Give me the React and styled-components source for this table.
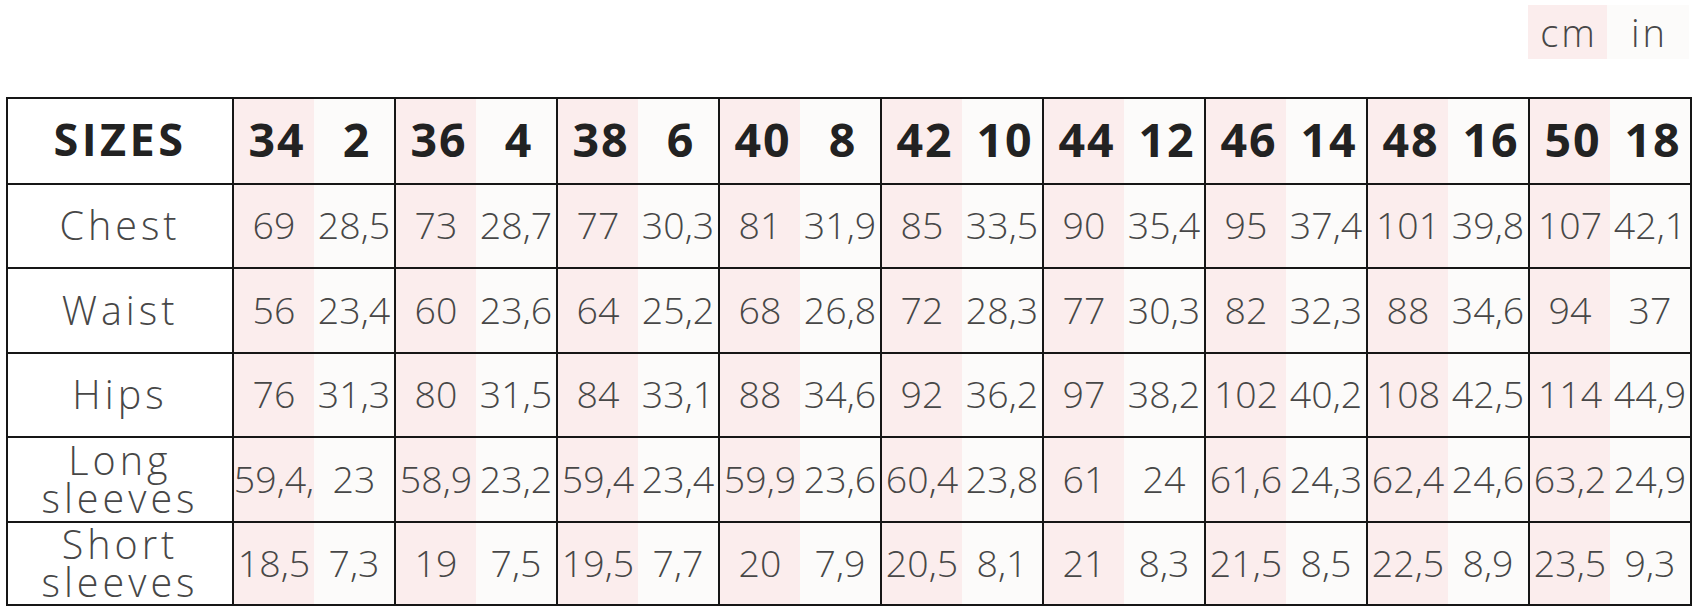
import React from 'react';
import styled, { createGlobalStyle } from 'styled-components';

const GlobalStyle = createGlobalStyle`
  body {
    margin: 0;
    background: #fff;
    font-family: 'Open Sans', 'Noto Sans', sans-serif;
    color: #2a2a2a;
  }
`;

const PINK = '#fbeded';
const CREAM = '#fcfbfa';
const LINE = '#161616';
// no light cut of Open Sans here, so thin text is faked with a softer grey
const THIN_TEXT = '#474747';

const Page = styled.div`
  width: 1686px;
  padding: 5px 0 0 6px;
`;

const Toggle = styled.div`
  display: flex;
  justify-content: flex-end;
  margin-right: 3px;
`;

const UnitButton = styled.button`
  width: ${(props) => (props.$unit === 'cm' ? '79px' : '82px')};
  height: 54px;
  padding: 0 0 0 3px;
  border: none;
  background: ${(props) => (props.$unit === 'cm' ? PINK : CREAM)};
  font-family: 'Open Sans', sans-serif;
  font-weight: 300;
  font-size: 38px;
  letter-spacing: 3px;
  color: ${THIN_TEXT};
  cursor: pointer;
`;

const Table = styled.div`
  margin-top: 38px;
  width: 1686px;
  box-sizing: border-box;
  border: 2px solid ${LINE};
`;

const Row = styled.div`
  display: grid;
  grid-template-columns: 224px repeat(9, 82px 80px);
  height: ${(props) => props.$height}px;
  box-sizing: border-box;
  border-top: ${(props) => (props.$first ? 'none' : `2px solid ${LINE}`)};
`;

const Label = styled.div`
  display: flex;
  align-items: center;
  justify-content: center;
  text-align: center;
  background: #fff;
  font-weight: ${(props) => (props.$head ? 700 : 300)};
  font-size: ${(props) => (props.$head ? '45px' : '39.5px')};
  letter-spacing: ${(props) => (props.$head ? '3.5px' : '4px')};
  line-height: 38px;
  padding-bottom: ${(props) => (props.$head ? '4px' : '2px')};
  color: ${(props) => (props.$head ? '#222' : THIN_TEXT)};
`;

const Value = styled.div`
  display: flex;
  align-items: center;
  justify-content: center;
  box-sizing: border-box;
  white-space: nowrap;
  border-left: ${(props) => (props.$unit === 'cm' ? `2px solid ${LINE}` : 'none')};
  background: ${(props) => (props.$unit === 'cm' ? PINK : CREAM)};
  font-weight: ${(props) => (props.$head ? 700 : 300)};
  font-size: ${(props) => (props.$head ? '46.5px' : '37.5px')};
  letter-spacing: ${(props) => (props.$head ? '2px' : '0')};
  padding-left: ${(props) => (props.$head ? '6px' : '0')};
  padding-bottom: ${(props) => (props.$head ? '4px' : '3px')};
  color: ${(props) => (props.$head ? '#222' : THIN_TEXT)};
`;

const rows = [
  {
    label: 'SIZES',
    head: true,
    height: 84,
    values: ['34', '2', '36', '4', '38', '6', '40', '8', '42', '10', '44', '12', '46', '14', '48', '16', '50', '18'],
  },
  {
    label: 'Chest',
    height: 84,
    values: ['69', '28,5', '73', '28,7', '77', '30,3', '81', '31,9', '85', '33,5', '90', '35,4', '95', '37,4', '101', '39,8', '107', '42,1'],
  },
  {
    label: 'Waist',
    height: 85,
    values: ['56', '23,4', '60', '23,6', '64', '25,2', '68', '26,8', '72', '28,3', '77', '30,3', '82', '32,3', '88', '34,6', '94', '37'],
  },
  {
    label: 'Hips',
    height: 84,
    values: ['76', '31,3', '80', '31,5', '84', '33,1', '88', '34,6', '92', '36,2', '97', '38,2', '102', '40,2', '108', '42,5', '114', '44,9'],
  },
  {
    label: ['Long', 'sleeves'],
    height: 85,
    values: ['59,4,', '23', '58,9', '23,2', '59,4', '23,4', '59,9', '23,6', '60,4', '23,8', '61', '24', '61,6', '24,3', '62,4', '24,6', '63,2', '24,9'],
  },
  {
    label: ['Short', 'sleeves'],
    height: 83,
    values: ['18,5', '7,3', '19', '7,5', '19,5', '7,7', '20', '7,9', '20,5', '8,1', '21', '8,3', '21,5', '8,5', '22,5', '8,9', '23,5', '9,3'],
  },
];

const App = () => {
  return (
    <Page>
      <GlobalStyle />
      <Toggle>
        <UnitButton $unit="cm">cm</UnitButton>
        <UnitButton $unit="in">in</UnitButton>
      </Toggle>
      <Table>
        {rows.map((row, i) => (
          <Row key={i} $height={row.height} $first={i === 0}>
            <Label $head={row.head}>
              {Array.isArray(row.label) ? (
                <span>
                  {row.label[0]}
                  <br />
                  {row.label[1]}
                </span>
              ) : (
                row.label
              )}
            </Label>
            {row.values.map((v, j) => (
              <Value key={j} $unit={j % 2 === 0 ? 'cm' : 'in'} $head={row.head}>
                {v}
              </Value>
            ))}
          </Row>
        ))}
      </Table>
    </Page>
  );
};

export default App;
